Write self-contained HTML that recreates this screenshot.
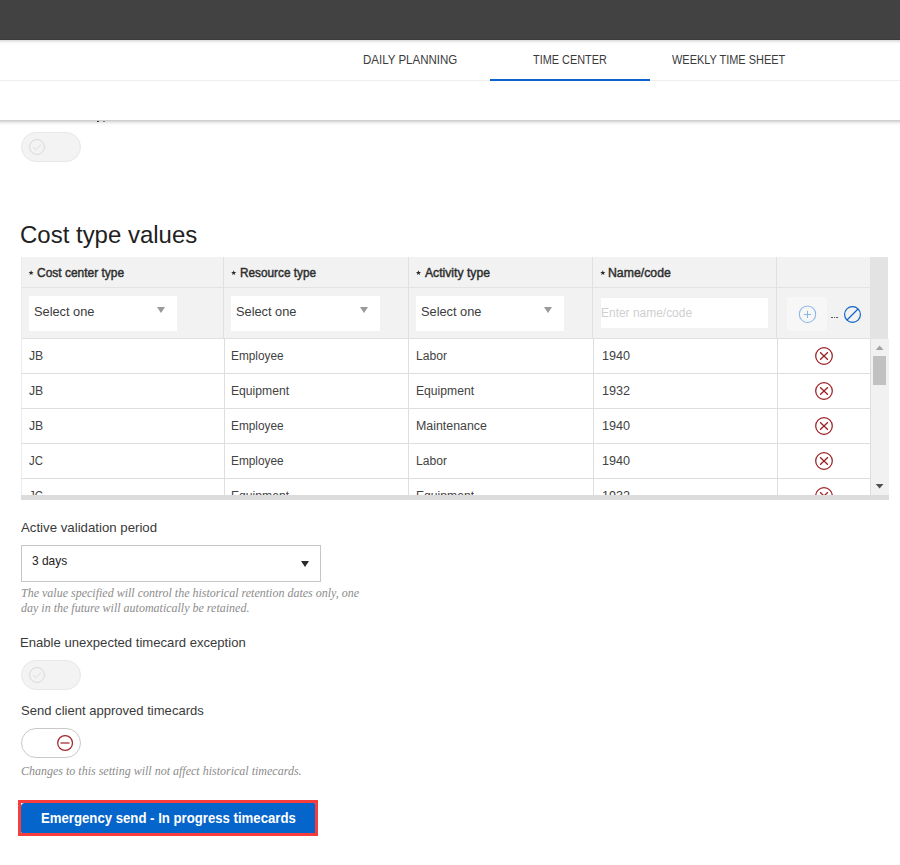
<!DOCTYPE html>
<html><head><meta charset="utf-8">
<style>
*{box-sizing:border-box;margin:0;padding:0}
html,body{width:900px;height:865px;overflow:hidden;background:#fff;font-family:"Liberation Sans",sans-serif;color:#333}
.a{position:absolute}
.t{position:absolute;white-space:nowrap;transform-origin:0 0}
.hint{position:absolute;font-family:"Liberation Serif",serif;font-style:italic;font-size:12px;color:#8c8c8c;line-height:15px;white-space:nowrap}
.toggle{position:absolute;width:60px;height:30px;border-radius:15px;border:1px solid #e8e8e8;background:#f3f3f3}
.tri{position:absolute;width:0;height:0;border-left:4px solid transparent;border-right:4px solid transparent;border-top:6px solid #9a9a9a}
</style></head><body>
<!-- top bar -->
<div class="a" style="left:0;top:0;width:900px;height:40px;background:#424242"></div>
<div class="a" style="left:0;top:39px;width:900px;height:1px;background:#3b3b3b"></div>
<!-- shadow under bar -->
<div class="a" style="left:0;top:40px;width:900px;height:1px;background:#dfdfdf"></div>
<div class="a" style="left:0;top:41px;width:900px;height:1px;background:#ebebeb"></div>
<div class="a" style="left:0;top:42px;width:900px;height:1px;background:#f5f5f5"></div>
<div class="a" style="left:0;top:43px;width:900px;height:1px;background:#fbfbfb"></div>
<!-- header divider + active underline -->
<div class="a" style="left:0;top:80px;width:900px;height:1px;background:#eeeeee"></div>
<div class="a" style="left:490px;top:79px;width:160px;height:2px;background:#0b62cc"></div>
<!-- shadow under header -->
<div class="a" style="left:0;top:120px;width:900px;height:1px;background:#cfcfcf"></div>
<div class="a" style="left:0;top:121px;width:900px;height:1px;background:#dcdcdc"></div>
<div class="a" style="left:0;top:122px;width:900px;height:1px;background:#e9e9e9"></div>
<div class="a" style="left:0;top:123px;width:900px;height:1px;background:#f3f3f3"></div>
<div class="a" style="left:0;top:124px;width:900px;height:1px;background:#fafafa"></div>
<div class="a" style="left:0;top:125px;width:900px;height:1px;background:#fdfdfd"></div>
<div class="a" style="left:97px;top:121px;width:2px;height:1px;background:#333"></div>
<div class="a" style="left:103px;top:121px;width:2px;height:1px;background:#777"></div>

<!-- top toggle -->
<div class="toggle" style="left:21px;top:132px">
 <svg width="60" height="30" style="position:absolute;left:-1px;top:-1px"><circle cx="16" cy="15" r="7.5" fill="none" stroke="#d9d9d9" stroke-width="1"/><path d="M12.3 15.1 L15 17.6 L19.8 12.7" fill="none" stroke="#d9d9d9" stroke-width="1"/></svg>
</div>

<!-- table -->
<div class="a" style="left:21px;top:257px;width:849px;height:81px;background:#f2f2f2"></div>
<div class="a" style="left:870px;top:257px;width:18px;height:82px;background:#e3e3e3"></div>
<div class="a" style="left:871px;top:339px;width:17.5px;height:156px;background:#f1f1f1"></div>
<div class="a" style="left:21px;top:287px;width:849px;height:1px;background:#e3e3e3"></div>
<div class="a" style="left:21px;top:338px;width:849px;height:1px;background:#e0e0e0"></div>
<div class="a" style="left:21px;top:257px;width:1px;height:238px;background:#ececec"></div>
<!-- header col borders -->
<div class="a" style="left:223px;top:257px;width:1px;height:81px;background:#e0e0e0"></div>
<div class="a" style="left:408px;top:257px;width:1px;height:81px;background:#e0e0e0"></div>
<div class="a" style="left:592px;top:257px;width:1px;height:81px;background:#e0e0e0"></div>
<div class="a" style="left:776px;top:257px;width:1px;height:81px;background:#e0e0e0"></div>
<!-- body col borders -->
<div class="a" style="left:224px;top:339px;width:1px;height:156px;background:#dedede"></div>
<div class="a" style="left:408px;top:339px;width:1px;height:156px;background:#dedede"></div>
<div class="a" style="left:593px;top:339px;width:1px;height:156px;background:#dedede"></div>
<div class="a" style="left:777px;top:339px;width:1px;height:156px;background:#dedede"></div>
<div class="a" style="left:870px;top:339px;width:1px;height:156px;background:#dedede"></div>
<div class="a" style="left:21px;top:373px;width:850px;height:1px;background:#dedede"></div>
<div class="a" style="left:21px;top:408px;width:850px;height:1px;background:#dedede"></div>
<div class="a" style="left:21px;top:443px;width:850px;height:1px;background:#dedede"></div>
<div class="a" style="left:21px;top:478px;width:850px;height:1px;background:#dedede"></div>
<!-- filter boxes -->
<div class="a" style="left:29px;top:296px;width:148px;height:35px;background:#fff"></div>
<div class="a" style="left:231px;top:296px;width:149px;height:35px;background:#fff"></div>
<div class="a" style="left:416px;top:296px;width:148px;height:35px;background:#fff"></div>
<div class="a" style="left:601px;top:298px;width:167px;height:30px;background:#fff"></div>
<div class="tri" style="left:157px;top:307px"></div>
<div class="tri" style="left:360px;top:307px"></div>
<div class="tri" style="left:544px;top:307px"></div>
<!-- header asterisks -->
<svg class="a" style="left:0;top:257px" width="900" height="31"><polygon points="31.10,13.25 31.78,14.97 33.62,15.08 32.19,16.26 32.66,18.04 31.10,17.05 29.54,18.04 30.01,16.26 28.58,15.08 30.42,14.97" fill="#2e2e2e"/><polygon points="233.70,13.25 234.38,14.97 236.22,15.08 234.79,16.26 235.26,18.04 233.70,17.05 232.14,18.04 232.61,16.26 231.18,15.08 233.02,14.97" fill="#2e2e2e"/><polygon points="418.50,13.25 419.18,14.97 421.02,15.08 419.59,16.26 420.06,18.04 418.50,17.05 416.94,18.04 417.41,16.26 415.98,15.08 417.82,14.97" fill="#2e2e2e"/><polygon points="602.80,13.25 603.48,14.97 605.32,15.08 603.89,16.26 604.36,18.04 602.80,17.05 601.24,18.04 601.71,16.26 600.28,15.08 602.12,14.97" fill="#2e2e2e"/></svg>
<!-- add button -->
<div class="a" style="left:787px;top:297px;width:40px;height:34px;background:#f7f7f7;border-radius:3px"></div>
<svg class="a" style="left:797px;top:304px" width="21" height="21" viewBox="0 0 21 21"><circle cx="10.5" cy="10.2" r="8.2" fill="none" stroke="#8ab5e9" stroke-width="1.05"/><path d="M10.5 6.8 V14 M6.8 10.5 H14.1" stroke="#8ab5e9" stroke-width="1"/></svg>
<div class="a" style="left:831px;top:316.6px;width:1.7px;height:1.5px;background:#5a5a5a"></div>
<div class="a" style="left:833.6px;top:316.6px;width:1.7px;height:1.5px;background:#5a5a5a"></div>
<div class="a" style="left:836.2px;top:316.6px;width:1.7px;height:1.5px;background:#5a5a5a"></div>
<svg class="a" style="left:842px;top:304px" width="21" height="21" viewBox="0 0 21 21"><circle cx="10.5" cy="10.5" r="7.9" fill="none" stroke="#1165ca" stroke-width="1.2"/><path d="M5 16 L16 5" stroke="#1165ca" stroke-width="1.2"/></svg>
<!-- row delete icons -->
<div class="a" style="left:0;top:0;width:900px;height:495px;overflow:hidden">
<svg class="a" style="left:814px;top:346px" width="20" height="20" viewBox="0 0 20 20"><circle cx="10" cy="10" r="8.3" fill="none" stroke="#9b1f23" stroke-width="1.25"/><path d="M6.1 6.2 L13.9 13.8 M13.9 6.2 L6.1 13.8" stroke="#9b1f23" stroke-width="1.25" fill="none"/></svg><svg class="a" style="left:814px;top:381px" width="20" height="20" viewBox="0 0 20 20"><circle cx="10" cy="10" r="8.3" fill="none" stroke="#9b1f23" stroke-width="1.25"/><path d="M6.1 6.2 L13.9 13.8 M13.9 6.2 L6.1 13.8" stroke="#9b1f23" stroke-width="1.25" fill="none"/></svg><svg class="a" style="left:814px;top:416px" width="20" height="20" viewBox="0 0 20 20"><circle cx="10" cy="10" r="8.3" fill="none" stroke="#9b1f23" stroke-width="1.25"/><path d="M6.1 6.2 L13.9 13.8 M13.9 6.2 L6.1 13.8" stroke="#9b1f23" stroke-width="1.25" fill="none"/></svg><svg class="a" style="left:814px;top:451px" width="20" height="20" viewBox="0 0 20 20"><circle cx="10" cy="10" r="8.3" fill="none" stroke="#9b1f23" stroke-width="1.25"/><path d="M6.1 6.2 L13.9 13.8 M13.9 6.2 L6.1 13.8" stroke="#9b1f23" stroke-width="1.25" fill="none"/></svg><svg class="a" style="left:814px;top:486px" width="20" height="20" viewBox="0 0 20 20"><circle cx="10" cy="10" r="8.3" fill="none" stroke="#9b1f23" stroke-width="1.25"/><path d="M6.1 6.2 L13.9 13.8 M13.9 6.2 L6.1 13.8" stroke="#9b1f23" stroke-width="1.25" fill="none"/></svg>
</div>
<!-- scrollbar -->
<svg class="a" style="left:870px;top:339px" width="19" height="156"><polygon points="5.7,11 13.5,11 9.6,6.5" fill="#a3a3a3"/><polygon points="5.7,145 13.5,145 9.6,149.5" fill="#505050"/></svg>
<div class="a" style="left:873px;top:356px;width:13px;height:29px;background:#c1c1c1"></div>

<!-- dropdown -->
<div class="a" style="left:21px;top:545px;width:300px;height:36.5px;border:1px solid #c6c6c6;background:#fff"></div>
<div class="a" style="left:300.7px;top:560.8px;width:0;height:0;border-left:4.7px solid transparent;border-right:4.7px solid transparent;border-top:6.2px solid #2b2b2b"></div>
<div class="hint" style="left:21px;top:586px">The value specified will control the historical retention dates only, one<br>day in the future will automatically be retained.</div>

<div class="toggle" style="left:21px;top:660px">
 <svg width="60" height="30" style="position:absolute;left:-1px;top:-1px"><circle cx="16" cy="15" r="7.5" fill="none" stroke="#d9d9d9" stroke-width="1"/><path d="M12.3 15.1 L15 17.6 L19.8 12.7" fill="none" stroke="#d9d9d9" stroke-width="1"/></svg>
</div>

<div class="toggle" style="left:21px;top:728px;background:#fff;border-color:#c9c9c9">
 <svg width="60" height="30" style="position:absolute;left:-1px;top:-1px"><circle cx="44.1" cy="15" r="7.4" fill="none" stroke="#a3262a" stroke-width="1.25"/><path d="M39.5 15 H48.5" stroke="#a3262a" stroke-width="1.25"/></svg>
</div>
<div class="hint" style="left:21px;top:764px">Changes to this setting will not affect historical timecards.</div>

<!-- button -->
<div class="a" style="left:18px;top:800px;width:300px;height:36px;background:#fff;border:3px solid #f93c3c"></div>
<div class="a" style="left:21px;top:803px;width:294px;height:30px;background:#0565cb;border-radius:4px 1px 0 1.5px"></div>
<div class="t" style="left:363.08px;top:53.20px;font:normal normal 12.5px/15px 'Liberation Sans',sans-serif;color:#3a3a3a;transform:scaleX(0.9208);">DAILY PLANNING</div>
<div class="t" style="left:533.00px;top:53.20px;font:normal normal 12.5px/15px 'Liberation Sans',sans-serif;color:#3a3a3a;transform:scaleX(0.8706);">TIME CENTER</div>
<div class="t" style="left:672.00px;top:53.20px;font:normal normal 12.5px/15px 'Liberation Sans',sans-serif;color:#3a3a3a;transform:scaleX(0.8760);">WEEKLY TIME SHEET</div>
<div class="t" style="left:20.23px;top:220.20px;font:normal normal 24.8px/29px 'Liberation Sans',sans-serif;color:#212121;transform:scaleX(0.9670);">Cost type values</div>
<div class="t" style="left:37.30px;top:266.00px;font:normal normal 12.5px/15px 'Liberation Sans',sans-serif;color:#2e2e2e;transform:scaleX(0.9571);-webkit-text-stroke:0.45px #2e2e2e">Cost center type</div>
<div class="t" style="left:239.80px;top:266.00px;font:normal normal 12.5px/15px 'Liberation Sans',sans-serif;color:#2e2e2e;transform:scaleX(0.9432);-webkit-text-stroke:0.45px #2e2e2e">Resource type</div>
<div class="t" style="left:424.87px;top:266.00px;font:normal normal 12.5px/15px 'Liberation Sans',sans-serif;color:#2e2e2e;transform:scaleX(0.9735);-webkit-text-stroke:0.45px #2e2e2e">Activity type</div>
<div class="t" style="left:608.40px;top:266.00px;font:normal normal 12.5px/15px 'Liberation Sans',sans-serif;color:#2e2e2e;transform:scaleX(0.9828);-webkit-text-stroke:0.45px #2e2e2e">Name/code</div>
<div class="t" style="left:33.90px;top:304.00px;font:normal normal 13.4px/16px 'Liberation Sans',sans-serif;color:#3c3c3c;transform:scaleX(0.9556);">Select one</div>
<div class="t" style="left:236.30px;top:304.00px;font:normal normal 13.4px/16px 'Liberation Sans',sans-serif;color:#3c3c3c;transform:scaleX(0.9556);">Select one</div>
<div class="t" style="left:421.30px;top:304.00px;font:normal normal 13.4px/16px 'Liberation Sans',sans-serif;color:#3c3c3c;transform:scaleX(0.9556);">Select one</div>
<div class="t" style="left:600.55px;top:306.00px;font:normal normal 12.6px/15px 'Liberation Sans',sans-serif;color:#cfcfcf;transform:scaleX(0.9495);">Enter name/code</div>
<div class="t" style="left:29.00px;top:349.30px;font:normal normal 12.5px/15px 'Liberation Sans',sans-serif;color:#424242;transform:scaleX(0.9786);">JB</div>
<div class="t" style="left:231.35px;top:349.30px;font:normal normal 12.5px/15px 'Liberation Sans',sans-serif;color:#424242;transform:scaleX(0.9455);">Employee</div>
<div class="t" style="left:415.73px;top:349.30px;font:normal normal 12.5px/15px 'Liberation Sans',sans-serif;color:#424242;transform:scaleX(0.9677);">Labor</div>
<div class="t" style="left:601.70px;top:349.30px;font:normal normal 12.5px/15px 'Liberation Sans',sans-serif;color:#424242;transform:scaleX(1.0107);">1940</div>
<div class="t" style="left:29.00px;top:384.30px;font:normal normal 12.5px/15px 'Liberation Sans',sans-serif;color:#424242;transform:scaleX(0.9786);">JB</div>
<div class="t" style="left:231.33px;top:384.30px;font:normal normal 12.5px/15px 'Liberation Sans',sans-serif;color:#424242;transform:scaleX(0.9712);">Equipment</div>
<div class="t" style="left:415.73px;top:384.30px;font:normal normal 12.5px/15px 'Liberation Sans',sans-serif;color:#424242;transform:scaleX(0.9712);">Equipment</div>
<div class="t" style="left:601.70px;top:384.30px;font:normal normal 12.5px/15px 'Liberation Sans',sans-serif;color:#424242;transform:scaleX(1.0107);">1932</div>
<div class="t" style="left:29.00px;top:419.30px;font:normal normal 12.5px/15px 'Liberation Sans',sans-serif;color:#424242;transform:scaleX(0.9786);">JB</div>
<div class="t" style="left:231.35px;top:419.30px;font:normal normal 12.5px/15px 'Liberation Sans',sans-serif;color:#424242;transform:scaleX(0.9455);">Employee</div>
<div class="t" style="left:415.71px;top:419.30px;font:normal normal 12.5px/15px 'Liberation Sans',sans-serif;color:#424242;transform:scaleX(0.9900);">Maintenance</div>
<div class="t" style="left:601.70px;top:419.30px;font:normal normal 12.5px/15px 'Liberation Sans',sans-serif;color:#424242;transform:scaleX(1.0107);">1940</div>
<div class="t" style="left:29.00px;top:454.30px;font:normal normal 12.5px/15px 'Liberation Sans',sans-serif;color:#424242;transform:scaleX(0.9133);">JC</div>
<div class="t" style="left:231.35px;top:454.30px;font:normal normal 12.5px/15px 'Liberation Sans',sans-serif;color:#424242;transform:scaleX(0.9455);">Employee</div>
<div class="t" style="left:415.73px;top:454.30px;font:normal normal 12.5px/15px 'Liberation Sans',sans-serif;color:#424242;transform:scaleX(0.9677);">Labor</div>
<div class="t" style="left:601.70px;top:454.30px;font:normal normal 12.5px/15px 'Liberation Sans',sans-serif;color:#424242;transform:scaleX(1.0107);">1940</div>
<div class="t" style="left:29.00px;top:489.30px;font:normal normal 12.5px/15px 'Liberation Sans',sans-serif;color:#424242;transform:scaleX(0.9133);;height:5.70px;overflow:hidden">JC</div>
<div class="t" style="left:231.33px;top:489.30px;font:normal normal 12.5px/15px 'Liberation Sans',sans-serif;color:#424242;transform:scaleX(0.9712);;height:5.70px;overflow:hidden">Equipment</div>
<div class="t" style="left:415.73px;top:489.30px;font:normal normal 12.5px/15px 'Liberation Sans',sans-serif;color:#424242;transform:scaleX(0.9712);;height:5.70px;overflow:hidden">Equipment</div>
<div class="t" style="left:601.70px;top:489.30px;font:normal normal 12.5px/15px 'Liberation Sans',sans-serif;color:#424242;transform:scaleX(1.0107);;height:5.70px;overflow:hidden">1932</div>
<div class="t" style="left:21.00px;top:520.00px;font:normal normal 13.4px/16px 'Liberation Sans',sans-serif;color:#3a3a3a;transform:scaleX(0.9883);">Active validation period</div>
<div class="t" style="left:31.60px;top:552.60px;font:normal normal 13.4px/16px 'Liberation Sans',sans-serif;color:#222;transform:scaleX(0.8923);">3 days</div>
<div class="t" style="left:20.02px;top:635.30px;font:normal normal 13.4px/16px 'Liberation Sans',sans-serif;color:#3a3a3a;transform:scaleX(0.9782);">Enable unexpected timecard exception</div>
<div class="t" style="left:20.90px;top:703.30px;font:normal normal 13.4px/16px 'Liberation Sans',sans-serif;color:#3a3a3a;transform:scaleX(0.9745);">Send client approved timecards</div>
<div class="t" style="left:41.14px;top:808.70px;font:normal bold 15.4px/18px 'Liberation Sans',sans-serif;color:#fff;transform:scaleX(0.8561);">Emergency send - In progress timecards</div>
<!-- bottom bar of grid (covers clipped row) -->
<div class="a" style="left:21px;top:495px;width:867.5px;height:5px;background:#dcdcdc"></div>
</body></html>
